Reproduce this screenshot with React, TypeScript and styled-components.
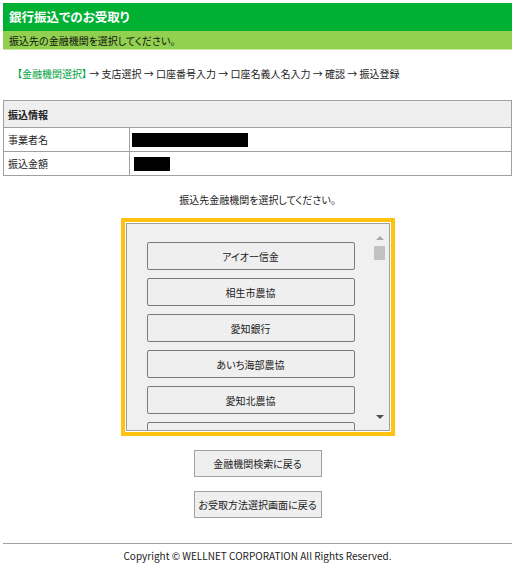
import styled, { createGlobalStyle } from 'styled-components';

const GlobalStyle = createGlobalStyle`
  body {
    margin: 0;
    background: #ffffff;
    font-family: 'Noto Sans CJK JP', 'Noto Sans', sans-serif;
    font-feature-settings: 'palt';
    color: #222222;
  }
`;

const banks = ['アイオー信金', '相生市農協', '愛知銀行', 'あいち海部農協', '愛知北農協', ''];

const App = () => {
  return (
    <Page>
      <GlobalStyle />
      <Title>銀行振込でのお受取り</Title>
      <SubTitle>振込先の金融機関を選択してください。</SubTitle>

      <Steps>
        <Current>【金融機関選択】</Current> → 支店選択 → 口座番号入力 → 口座名義人名入力 → 確認 → 振込登録
      </Steps>

      <InfoTable>
        <tbody>
          <tr>
            <HeadCell colSpan={2}>振込情報</HeadCell>
          </tr>
          <tr>
            <LabelCell>事業者名</LabelCell>
            <ValueCell>
              <Masked $w={116} />
            </ValueCell>
          </tr>
          <tr>
            <LabelCell>振込金額</LabelCell>
            <ValueCell>
              <Masked $w={36} $left={2} />
            </ValueCell>
          </tr>
        </tbody>
      </InfoTable>

      <Prompt>振込先金融機関を選択してください。</Prompt>

      <Highlight>
        <ListBox>
          <BankList>
            {banks.map((b, i) => (
              <BankButton key={i}>{b}</BankButton>
            ))}
          </BankList>
          <ScrollBar>
            <Arrow $dir="up" />
            <Thumb />
            <Spacer />
            <Arrow $dir="down" />
          </ScrollBar>
        </ListBox>
      </Highlight>

      <BackButtons>
        <BackButton>金融機関検索に戻る</BackButton>
        <BackButton>お受取方法選択画面に戻る</BackButton>
      </BackButtons>

      <Footer>Copyright © WELLNET CORPORATION All Rights Reserved.</Footer>
    </Page>
  );
};

export default App;

const Page = styled.div`
  width: 509px;
  padding: 3px;
  font-size: 10px;
`;

const Title = styled.div`
  height: 28px;
  line-height: 28px;
  padding-left: 6px;
  background: #00b033;
  color: #ffffff;
  font-size: 12.5px;
  font-weight: 700;
`;

const SubTitle = styled.div`
  height: 19px;
  line-height: 19px;
  padding-left: 6px;
  background: #92d050;
  border-bottom: 1px solid #c8e8a4;
  box-sizing: border-box;
  color: #111111;
`;

const Steps = styled.div`
  margin: 17px 0 0 14px;
  line-height: 14px;
  color: #222222;
  white-space: nowrap;
`;

const Current = styled.span`
  color: #00a040;
`;

const InfoTable = styled.table`
  width: 100%;
  margin-top: 19px;
  border-collapse: collapse;
  border: 1px solid #a0a0a0;
`;

const HeadCell = styled.td`
  height: 26px;
  padding: 0 4px;
  background: #efefef;
  border: 1px solid #a0a0a0;
  font-weight: 700;
`;

const LabelCell = styled.td`
  width: 117px;
  height: 23px;
  padding: 0 4px;
  border: 1px solid #a0a0a0;
`;

const ValueCell = styled.td`
  height: 23px;
  padding: 0 2px;
  border: 1px solid #a0a0a0;
`;

const Masked = styled.div<{ $w: number; $left?: number }>`
  width: ${(p) => p.$w}px;
  height: 14px;
  margin-left: ${(p) => p.$left ?? 0}px;
  background: #000000;
`;

const Prompt = styled.div`
  margin-top: 17px;
  line-height: 14px;
  text-align: center;
`;

const Highlight = styled.div`
  width: 264px;
  margin: 11px auto 0;
  border: 4px solid #ffc20e;
  padding: 1px;
  background: #ffffff;
`;

const ListBox = styled.div`
  height: 206px;
  display: flex;
  border: 1px solid #a0a0a0;
  background: #f0f0f0;
  overflow: hidden;
`;

const BankList = styled.div`
  flex: 1;
  display: flex;
  flex-direction: column;
  gap: 8px;
  padding: 18px 0 0 20px;
`;

const BankButton = styled.div`
  flex: none;
  width: 208px;
  height: 28px;
  box-sizing: border-box;
  display: flex;
  align-items: center;
  justify-content: center;
  border: 1px solid #7a7a7a;
  border-radius: 2px;
  background: #efefef;
  color: #222222;
`;

const ScrollBar = styled.div`
  width: 18px;
  display: flex;
  flex-direction: column;
  align-items: center;
  padding: 12px 0 11px;
`;

const Arrow = styled.div<{ $dir: 'up' | 'down' }>`
  width: 0;
  height: 0;
  border-left: 4px solid transparent;
  border-right: 4px solid transparent;
  ${(p) =>
    p.$dir === 'up'
      ? 'border-bottom: 4px solid #a8a8a8;'
      : 'border-top: 4px solid #505050;'}
`;

const Thumb = styled.div`
  width: 11px;
  height: 14px;
  margin-top: 6px;
  background: #c2c2c2;
`;

const Spacer = styled.div`
  flex: 1;
`;

const BackButtons = styled.div`
  display: flex;
  flex-direction: column;
  align-items: center;
  gap: 14px;
  margin-top: 14px;
`;

const BackButton = styled.div`
  width: 128px;
  height: 27px;
  box-sizing: border-box;
  display: flex;
  align-items: center;
  justify-content: center;
  border: 1px solid #a0a0a0;
  background: #efefef;
  color: #222222;
  white-space: nowrap;
`;

const Footer = styled.div`
  margin-top: 25px;
  padding-top: 5px;
  border-top: 1px solid #a0a0a0;
  line-height: 14px;
  text-align: center;
  color: #222222;
`;
